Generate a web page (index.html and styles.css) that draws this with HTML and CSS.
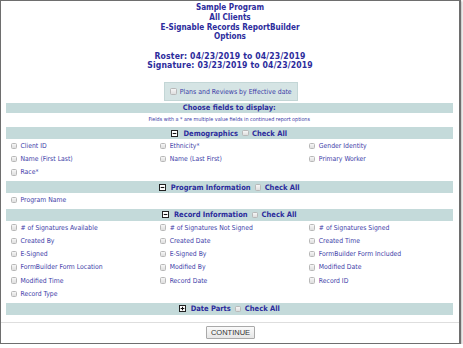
FILE: index.html
```html
<!DOCTYPE html>
<html>
<head>
<meta charset="utf-8">
<link rel="stylesheet" href="styles.css">
</head>
<body>
<div class="frame">
  <div class="titles">
    <div>Sample Program</div>
    <div>All Clients</div>
    <div>E-Signable Records ReportBuilder</div>
    <div>Options</div>
    <div class="blank">&nbsp;</div>
    <div class="dates">Roster: 04/23/2019 to 04/23/2019</div>
    <div class="dates">Signature: 03/23/2019 to 04/23/2019</div>
  </div>
  <div class="plans-wrap">
    <div class="plans"><span class="cb"></span><span>Plans and Reviews by Effective date</span></div>
  </div>
  <div class="fields">
    <div class="bar">Choose fields to display:</div>
    <div class="note">Fields with a * are multiple value fields in continued report options</div>

    <div class="section">
      <div class="sec-head">
        <svg class="tog" viewBox="0 0 7 7"><rect x="0.5" y="0.5" width="6" height="6" fill="#fff" stroke="#222"/><path d="M1.7 3.5H5.3" stroke="#111" stroke-width="1.1"/></svg>
        <span class="name">Demographics</span><span class="cb"></span><span>Check All</span>
      </div>
      <div class="grid">
        <div class="item"><span class="cb"></span>Client ID</div>
        <div class="item"><span class="cb"></span>Ethnicity*</div>
        <div class="item"><span class="cb"></span>Gender Identity</div>
        <div class="item"><span class="cb"></span>Name (First Last)</div>
        <div class="item"><span class="cb"></span>Name (Last First)</div>
        <div class="item"><span class="cb"></span>Primary Worker</div>
        <div class="item"><span class="cb"></span>Race*</div>
      </div>
    </div>

    <div class="section">
      <div class="sec-head">
        <svg class="tog" viewBox="0 0 7 7"><rect x="0.5" y="0.5" width="6" height="6" fill="#fff" stroke="#222"/><path d="M1.7 3.5H5.3" stroke="#111" stroke-width="1.1"/></svg>
        <span class="name">Program Information</span><span class="cb"></span><span>Check All</span>
      </div>
      <div class="grid">
        <div class="item"><span class="cb"></span>Program Name</div>
      </div>
    </div>

    <div class="section">
      <div class="sec-head">
        <svg class="tog" viewBox="0 0 7 7"><rect x="0.5" y="0.5" width="6" height="6" fill="#fff" stroke="#222"/><path d="M1.7 3.5H5.3" stroke="#111" stroke-width="1.1"/></svg>
        <span class="name">Record Information</span><span class="cb"></span><span>Check All</span>
      </div>
      <div class="grid">
        <div class="item"><span class="cb"></span># of Signatures Available</div>
        <div class="item"><span class="cb"></span># of Signatures Not Signed</div>
        <div class="item"><span class="cb"></span># of Signatures Signed</div>
        <div class="item"><span class="cb"></span>Created By</div>
        <div class="item"><span class="cb"></span>Created Date</div>
        <div class="item"><span class="cb"></span>Created Time</div>
        <div class="item"><span class="cb"></span>E-Signed</div>
        <div class="item"><span class="cb"></span>E-Signed By</div>
        <div class="item"><span class="cb"></span>FormBuilder Form Included</div>
        <div class="item"><span class="cb"></span>FormBuilder Form Location</div>
        <div class="item"><span class="cb"></span>Modified By</div>
        <div class="item"><span class="cb"></span>Modified Date</div>
        <div class="item"><span class="cb"></span>Modified Time</div>
        <div class="item"><span class="cb"></span>Record Date</div>
        <div class="item"><span class="cb"></span>Record ID</div>
        <div class="item"><span class="cb"></span>Record Type</div>
      </div>
    </div>

    <div class="section last">
      <div class="sec-head">
        <svg class="tog" viewBox="0 0 7 7"><rect x="0.5" y="0.5" width="6" height="6" fill="#fff" stroke="#222"/><path d="M1.7 3.5H5.3M3.5 1.7V5.3" stroke="#111" stroke-width="1.1"/></svg>
        <span class="name">Date Parts</span><span class="cb"></span><span>Check All</span>
      </div>
    </div>
  </div>
  <div class="footer">
    <button class="btn" type="button">CONTINUE</button>
  </div>
</div>
</body>
</html>
```
FILE: styles.css
```css
* { box-sizing: border-box; }
html, body { margin: 0; padding: 0; background: #fff; }
body {
  font-family: "DejaVu Sans Condensed", "DejaVu Sans", sans-serif;
  color: #3d3da8;
}
.frame {
  width: 461px;
  border: 1px solid #6e6e6e;
  border-right-width: 2px;
  box-shadow: 1px 1px 2px #bdbdbd;
  padding-top: 2.2px;
}
.titles {
  text-align: center;
  color: #2c2c9c;
  font-weight: bold;
  font-size: 8.1px;
  line-height: 9.7px;
}
.titles .dates {
  font-size: 8.6px;
  letter-spacing: 0.15px;
}
.plans-wrap {
  display: flex;
  justify-content: center;
  margin-top: 11px;
}
.plans {
  width: 134px;
  height: 19px;
  margin-left: 2px;
  background: #d5e4e4;
  border: 1px solid #c3d6d6;
  display: flex;
  align-items: center;
  justify-content: center;
  gap: 3px;
  font-size: 6.9px;
  color: #3a3aa6;
}
.cb {
  display: inline-block;
  flex: none;
  width: 6.5px;
  height: 6.5px;
  border: 1px solid #b8b8b8;
  border-radius: 1.5px;
  background: linear-gradient(#f6f6f6, #dedede);
}
.fields {
  margin: 0 6px 0 4.5px;
}
.bar {
  margin-top: 2px;
  height: 10px;
  background: #c4dada;
  text-align: center;
  font-weight: bold;
  font-size: 7.5px;
  line-height: 10px;
  color: #2c2c9c;
}
.note {
  text-align: center;
  font-size: 5.4px;
  line-height: 8px;
  padding: 2px 0 4px;
  color: #3a3aa6;
}
.section {
  margin-bottom: 2.3px;
}
.section.last {
  margin-bottom: 0;
}
.sec-head {
  height: 12px;
  background: #c4dada;
  display: flex;
  justify-content: center;
  align-items: center;
  gap: 3.5px;
  font-weight: bold;
  font-size: 7.5px;
  color: #2c2c9c;
}
.sec-head .name {
  margin-left: 1.5px;
  margin-right: 0.5px;
}
.tog {
  width: 7px;
  height: 7px;
  flex: none;
}
.grid {
  display: grid;
  grid-template-columns: repeat(3, 1fr);
  grid-auto-rows: 13.3px;
}
.item {
  display: flex;
  align-items: center;
  gap: 3.5px;
  padding-left: 5px;
  font-size: 6.8px;
  color: #3d3da8;
  white-space: nowrap;
}
.footer {
  margin-top: 7px;
  border-top: 1px solid #dedede;
  display: flex;
  justify-content: center;
  padding: 3px 0 4px;
}
.btn {
  width: 49px;
  height: 13px;
  padding: 0;
  margin-left: 1px;
  font-family: "Liberation Sans", Arial, sans-serif;
  font-size: 7.5px;
  color: #333;
  background: linear-gradient(#fafafa, #e6e6e6);
  border: 1px solid #a9a9a9;
  border-radius: 1px;
}
```
